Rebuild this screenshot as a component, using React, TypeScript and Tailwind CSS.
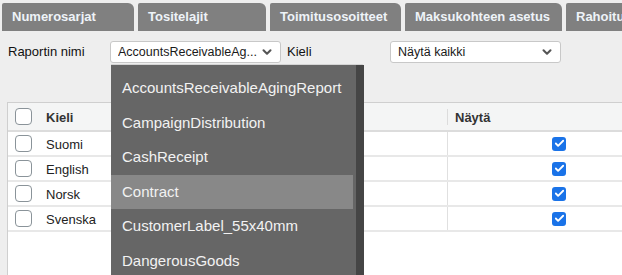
import { Check, ChevronDown } from 'lucide-react';

const tabs = [
    { label: 'Numerosarjat', w: 'w-[132px]' },
    { label: 'Tositelajit', w: 'w-[128px]' },
    { label: 'Toimitusosoitteet', w: 'w-[131px]' },
    { label: 'Maksukohteen asetus', w: 'w-[157px]' },
    { label: 'Rahoitus', w: 'w-[120px]' },
];

const languages = ['Suomi', 'English', 'Norsk', 'Svenska'];

const reports = [
    'AccountsReceivableAgingReport',
    'CampaignDistribution',
    'CashReceipt',
    'Contract',
    'CustomerLabel_55x40mm',
    'DangerousGoods',
];

function Select({ value }: { value: string }) {
    return (
        <div className="w-[171px] h-[22px] bg-white border border-[#c8c8c8] rounded-[3px] flex items-center pl-[7px] pr-[6px] text-[12.5px] text-[#1a1a1a]">
            <span className="flex-1 whitespace-nowrap overflow-hidden">{value}</span>
            <ChevronDown className="w-[14px] h-[14px] text-[#555] shrink-0" strokeWidth={3.5} />
        </div>
    );
}

function Box({ checked = false }: { checked?: boolean }) {
    if (checked) {
        return (
            <span className="w-[14px] h-[14px] rounded-[3px] bg-[#1a73e8] flex items-center justify-center">
                <Check className="w-[11px] h-[11px] text-white" strokeWidth={4} />
            </span>
        );
    }
    return <span className="w-[17px] h-[17px] rounded-[4px] border border-[#8a9399] bg-white" />;
}

export default function App() {
    return (
        <div className="relative w-[622px] h-[275px] overflow-hidden bg-[#eeeeee] font-['Liberation_Sans',Arial,sans-serif]">
            <div className="flex gap-[4px] pl-[2px] pt-[3px]">
                {tabs.map((t) => (
                    <div
                        key={t.label}
                        className={`${t.w} shrink-0 h-[28px] bg-[#808080] rounded-tr-[6px] rounded-tl-[2px] pl-[10px] flex items-center text-[13px] font-bold text-[#eef3f8] whitespace-nowrap overflow-hidden`}
                    >
                        {t.label}
                    </div>
                ))}
            </div>

            <div className="flex items-center h-[22px] mt-[10px] text-[13px] text-[#111]">
                <span className="w-[110px] pl-[8px]">Raportin nimi</span>
                <Select value="AccountsReceivableAg..." />
                <span className="w-[109px] pl-[6px]">Kieli</span>
                <Select value="Näytä kaikki" />
            </div>

            <div className="ml-[7px] mt-[39px] w-[640px] h-[200px] bg-white border-l border-t border-[#cfcfcf] text-[13px]">
                <div className="flex items-center h-[29px] bg-[#f4f5f5] border-b-2 border-[#dcdcdc]">
                    <div className="w-[36px] pl-[7px] flex items-center">
                        <Box />
                    </div>
                    <span className="w-[403px] pl-[2px] pt-[2px] font-bold text-[#333]">Kieli</span>
                    <div className="h-[16px] border-l border-[#dcdcdc] pl-[7px] pt-[2px] font-bold text-[#333] flex items-center">Näytä</div>
                </div>
                {languages.map((l) => (
                    <div key={l} className="flex items-center h-[25px] border-b-2 border-[#e8e8e8]">
                        <div className="w-[36px] pl-[7px] flex items-center">
                            <Box />
                        </div>
                        <span className="w-[403px] pl-[2px] pt-[3px] text-[#222]">{l}</span>
                        <div className="h-full border-l border-[#e0e0e0] w-[180px] flex items-center pl-[104px]">
                            <Box checked />
                        </div>
                    </div>
                ))}
            </div>

            <div className="absolute left-[111px] top-[64px] w-[253px] h-[230px] bg-[#666666] border-t border-[#d4d4d4] rounded-tr-[3px] flex">
                <div className="flex-1 pt-[6px]">
                    {reports.map((r) => (
                        <div
                            key={r}
                            className={`h-[34.5px] flex items-center pl-[11px] text-[15px] text-[#f2f2f2] ${r === 'Contract' ? 'bg-[#888888]' : ''}`}
                        >
                            {r}
                        </div>
                    ))}
                </div>
                <div className="w-[8px] bg-[#454545] ml-[3px]" />
            </div>
        </div>
    );
}
